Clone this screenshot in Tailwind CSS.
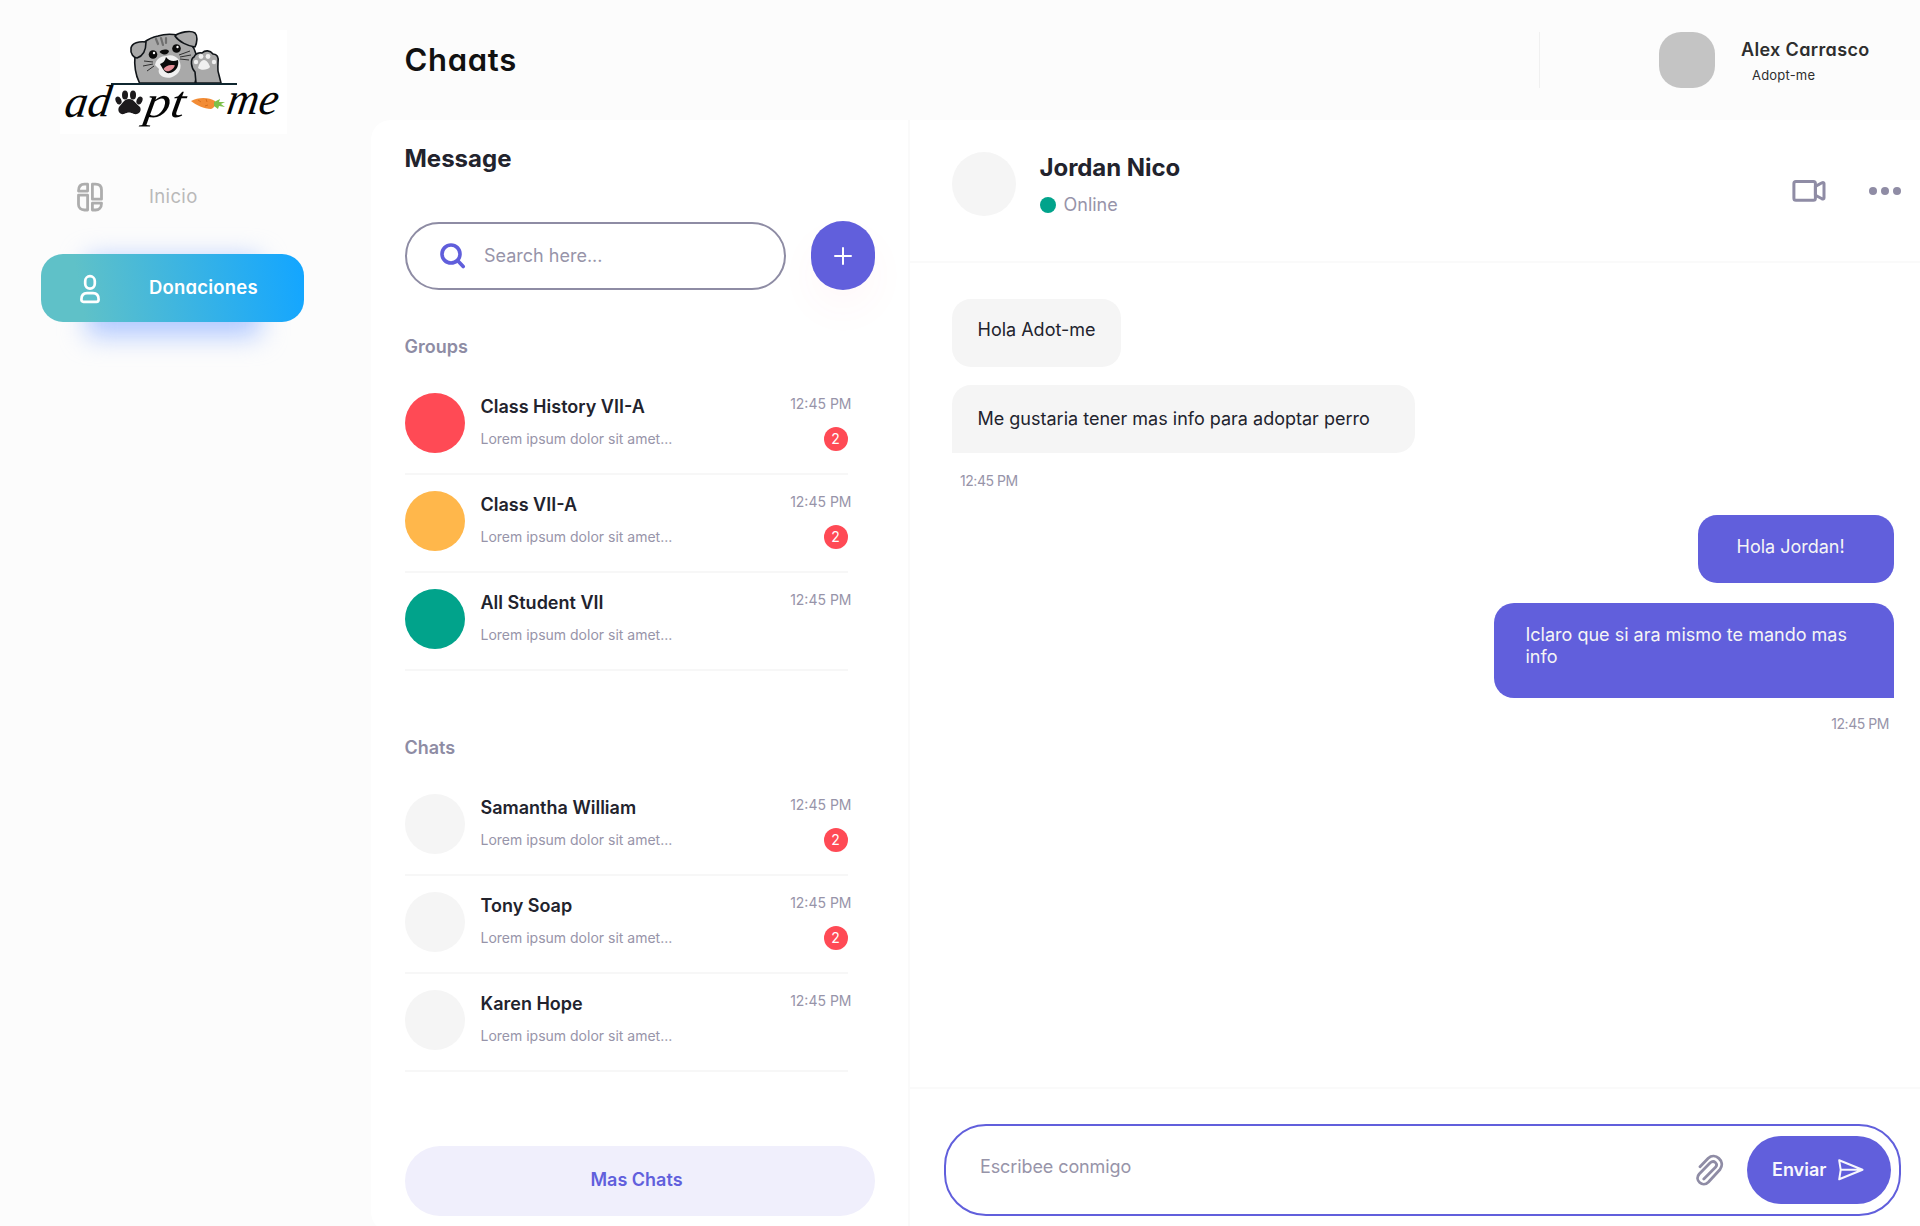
<!DOCTYPE html>
<html lang="es">
<head>
<meta charset="utf-8">
<title>Adopt-me</title>
<script src="https://cdn.jsdelivr.net/npm/@tailwindcss/browser@4"></script>
</head>
<body class="bg-[#fcfcfc] font-['Inter',sans-serif] text-[#22232d] antialiased">
<div class="flex h-[1226px] w-[1920px] overflow-hidden">

  <!-- Sidebar -->
  <aside class="flex w-[371px] shrink-0 flex-col pt-[30px] [font-feature-settings:'cv11']">
    <svg class="ml-[60px] h-[104px] w-[227px] bg-white" viewBox="0 0 227 104">
      <g stroke="#101418" stroke-width="1.6" stroke-linejoin="round" stroke-linecap="round">
        <path d="M79.500 53C75 44 74 36 75 25C78 15 88 8 98 6C104 4 112 4 118 5C127 9 134 16 136 24L138 40L135 53Z" fill="#a9a9a9"/>
        <path d="M86 12C79 11 72 13 71 18C70 24 74 28 77 28C83 26 86 20 86 12Z" fill="#a9a9a9"/>
        <path d="M115 6C119 2 131 0 135 3C138 6 137 13 135 17C128 16 119 12 115 6Z" fill="#a9a9a9"/>
        <path d="M136 53L135 42C131 38 130 29 134 27C135 24 139 22 142 23C145 20 150 20 153 24C157 24 159 27 158 33C158 38 157 40 159 45L161 53Z" fill="#a9a9a9"/>
      </g>
      <g stroke="#6f6f6f" stroke-width="2.2" stroke-linecap="round"><path d="M96 9L98 14M101 8L103 15M106 8L106 13"/></g>
      <path d="M95 35C96 29 101 26 106 26C111 24 116 26 119 30C123 38 119 45 111 47.500C103 49 97 44 99 39Z" fill="#f0f0f0"/>
      <circle cx="93" cy="24.500" r="4.300" fill="#0b0b0b"/><circle cx="116.500" cy="18.500" r="4.300" fill="#0b0b0b"/>
      <circle cx="94" cy="23" r="1.200" fill="#fff"/><circle cx="117.500" cy="17" r="1.200" fill="#fff"/>
      <path d="M99.500 22C102 19 107 19 109 21C108 25 104 26 99.500 22Z" fill="#0b0b0b"/>
      <path d="M100 34C103 33 105 31 106 27C109 31 113 32 118 30C119.500 37 115 42 110 43C105 44 103 39 100 34Z" fill="#0b0b0b"/>
      <path d="M103.500 39C105 36 110 34 115 35.500C113 40 107 44 103.500 39Z" fill="#e58f98"/>
      <path d="M93 32L84 31M93 34L83 36M94 36L87 41M119 25L130 21M120 27L131 25M120 29L129 30" stroke="#222" stroke-width=".9" fill="none"/>
      <g fill="#f0f0f0"><path d="M138 38C139 34 141 30 144 30C147 30 149 34 150 37C148 40 141 41 138 38Z"/><circle cx="136" cy="32" r="2.200"/><circle cx="141" cy="26.500" r="2.400"/><circle cx="148" cy="26.500" r="2.400"/><circle cx="154" cy="32" r="2.200"/></g>
      <path d="M51 54H177" stroke="#0f2730" stroke-width="1.800"/>
      <g font-family="'Liberation Serif',serif" font-style="italic" font-size="45" fill="#050505">
        <text x="4" y="87" textLength="46" lengthAdjust="spacingAndGlyphs" transform="rotate(-1 4 86) skewX(-9)" dx="13">ad</text>
        <text x="84" y="87" textLength="40" lengthAdjust="spacingAndGlyphs" transform="skewX(-9)" dx="13">pt</text>
        <text x="167" y="84.500" textLength="51" lengthAdjust="spacingAndGlyphs" transform="skewX(-9)" dx="12">me</text>
      </g>
      <g fill="#1c1a1c"><path d="M69 69C64 69 62 74 59 77C57 81 60 85 64 84C68 82 70 82 74 84C79 85 82 81 80 77C76 74 74 69 69 69Z"/><ellipse cx="58.500" cy="70.500" rx="2.800" ry="4" transform="rotate(-25 58.500 70.500)"/><ellipse cx="65" cy="65" rx="3" ry="4.500"/><ellipse cx="73" cy="65" rx="3" ry="4.500"/><ellipse cx="79.500" cy="70.500" rx="2.800" ry="4" transform="rotate(25 79.500 70.500)"/></g>
      <path d="M131 71C138 67 149 67 155 71C156 75 154 78 151 79C144 79 136 75 131 71Z" fill="#f28c35"/>
      <path d="M138 70L141 72M146 69L147 72M145 76L148 75" stroke="#d96e1b"/>
      <path d="M154 72L160 69L159 72L165 72L161 74L165 77L159 76L158 79L154 76Z" fill="#7cc04a"/>
    </svg>

    <nav class="flex flex-col">
      <a class="mt-[29px] flex h-[68px] items-center pl-[77px] text-[#b9b9b9]">
        <svg class="h-[30px] w-[26px]" viewBox="0 0 26 30" fill="none" stroke="#adadad" stroke-width="2.800" stroke-linejoin="round">
          <path d="M10.600 9.100H1.500C1.500 4.500 4 2.200 7.500 2.200H10.600Z"/>
          <path d="M1.500 13.200H10.600V28H7.500C4 28 1.500 26 1.500 22.500Z"/>
          <path d="M15.400 2.200H18.500C22.500 2.200 24.500 4.500 24.500 8V17.200H15.400Z"/>
          <path d="M15.400 21.200H24.500C24.500 25.500 22 28 18.500 28H15.400Z"/>
        </svg>
        <span class="ml-[46px] text-[18.500px] tracking-[0.350px]">Inicio</span>
      </a>
      <a class="relative z-0 mt-[23px] ml-[41px] h-[68px] w-[263px] text-white">
        <div class="absolute top-[4px] left-[46px] -z-20 h-[78px] w-[173px] bg-[#b0c8ff] blur-[13px]"></div>
        <div class="flex h-full items-center rounded-[22px] bg-[linear-gradient(80deg,#5fc1c8_16%,#14a6ff_98%)] pl-[39px]">
          <svg class="mt-px h-[30px] w-5" viewBox="0 0 20 30" fill="none" stroke="#fff" stroke-width="2.700">
            <rect x="5.200" y="2.200" width="9.600" height="12.400" rx="4.800"/><path d="M7 19.200H13C16.500 19.200 18.600 21.500 18.600 25.500C18.600 27 18 27.800 16.500 27.800H3.500C2 27.800 1.400 27 1.400 25.500C1.400 21.500 3.500 19.200 7 19.200Z"/>
          </svg>
          <span class="ml-[49px] text-[18.500px] font-semibold tracking-[0.200px]">Donaciones</span>
        </div>
      </a>
    </nav>
  </aside>

  <div class="flex w-[1549px] flex-col">
    <!-- Top bar -->
    <header class="flex h-[120px] shrink-0 items-center pl-[33.500px] [font-feature-settings:'cv11']">
      <h1 class="-mt-px text-[31px] leading-[36px] font-semibold tracking-[0.700px] text-[#111]">Chaats</h1>
      <div class="ml-auto flex h-14 items-center border-l border-[#f0f0f0] pr-[51px] pl-[119px]">
        <div class="size-14 rounded-[22px] bg-[#c4c4c4]"></div>
        <div class="ml-[26px] flex w-[128px] flex-col items-start text-[#2e2e2e]">
          <span class="mt-[2px] text-[18px] leading-6 font-semibold tracking-[0.350px] whitespace-nowrap">Alex Carrasco</span>
          <span class="mt-[3px] ml-[11px] text-[13px] leading-5 tracking-[0.200px]">Adopt-me</span>
        </div>
      </div>
    </header>

    <main class="flex h-[1112px] shrink-0 rounded-l-[20px] bg-white">
      <!-- Conversation list -->
      <section class="flex w-[539px] shrink-0 flex-col border-r-2 border-[#fafafa] pl-[33.500px]">
        <h2 class="mt-[23px] text-[24px] leading-8 font-bold">Message</h2>
        <div class="mt-[46px] flex h-[69px] items-center">
          <div class="flex h-[68px] w-[381px] items-center rounded-full border-2 border-[#8e8ca4] pl-[33.500px] text-[#9794a9]">
            <svg class="size-[26px]" viewBox="0 0 26 26" fill="none" stroke="#605edb" stroke-width="3.600" stroke-linecap="round"><circle cx="11" cy="11" r="9"/><path d="M17.800 17.800L23.200 23.500"/></svg>
            <span class="ml-[18px] text-[18px]">Search here...</span>
          </div>
          <button class="ml-[25px] flex h-[69px] w-16 items-center justify-center rounded-full bg-[#615fdc] shadow-[0_20px_40px_rgba(255,80,100,0.04)]">
            <svg class="size-[18px]" viewBox="0 0 18 18" stroke="#fff" stroke-width="2" stroke-linecap="round"><path d="M9 1V17M1 9H17"/></svg>
          </button>
        </div>

        <h3 class="mt-[45px] text-[18px] leading-6 font-semibold text-[#8e8ca4]">Groups</h3>
        <ul class="mt-[34px] flex w-[443px] flex-col gap-4">
          <li class="flex h-[82px] border-b-2 border-[#f7f7f7]">
            <div class="size-[60px] shrink-0 rounded-full bg-[#ff4a55]"></div>
            <div class="ml-4 flex-1"><p class="mt-[2px] text-[18px] leading-6 font-semibold">Class History VII-A</p><p class="mt-[10px] text-[14px] leading-5 text-[#9794a9]">Lorem ipsum dolor sit amet...</p></div>
            <div class="-mr-1 flex flex-col items-end text-[14px] leading-5 text-[#9794a9]"><span class="mt-px">12:45 PM</span><span class="mt-[13px] mr-1 flex size-6 items-center justify-center rounded-full bg-[#ff4a55] text-white">2</span></div>
          </li>
          <li class="flex h-[82px] border-b-2 border-[#f7f7f7]">
            <div class="size-[60px] shrink-0 rounded-full bg-[#ffb74b]"></div>
            <div class="ml-4 flex-1"><p class="mt-[2px] text-[18px] leading-6 font-semibold">Class VII-A</p><p class="mt-[10px] text-[14px] leading-5 text-[#9794a9]">Lorem ipsum dolor sit amet...</p></div>
            <div class="-mr-1 flex flex-col items-end text-[14px] leading-5 text-[#9794a9]"><span class="mt-px">12:45 PM</span><span class="mt-[13px] mr-1 flex size-6 items-center justify-center rounded-full bg-[#ff4a55] text-white">2</span></div>
          </li>
          <li class="flex h-[82px] border-b-2 border-[#f7f7f7]">
            <div class="size-[60px] shrink-0 rounded-full bg-[#01a38b]"></div>
            <div class="ml-4 flex-1"><p class="mt-[2px] text-[18px] leading-6 font-semibold">All Student VII</p><p class="mt-[10px] text-[14px] leading-5 text-[#9794a9]">Lorem ipsum dolor sit amet...</p></div>
            <div class="-mr-1 text-[14px] leading-5 text-[#9794a9]"><p class="mt-px">12:45 PM</p></div>
          </li>
        </ul>

        <h3 class="mt-[65px] text-[18px] leading-6 font-semibold text-[#8e8ca4]">Chats</h3>
        <ul class="mt-[34px] flex w-[443px] flex-col gap-4">
          <li class="flex h-[82px] border-b-2 border-[#f7f7f7]">
            <div class="size-[60px] shrink-0 rounded-full bg-[#f5f5f5]"></div>
            <div class="ml-4 flex-1"><p class="mt-[2px] text-[18px] leading-6 font-semibold">Samantha William</p><p class="mt-[10px] text-[14px] leading-5 text-[#9794a9]">Lorem ipsum dolor sit amet...</p></div>
            <div class="-mr-1 flex flex-col items-end text-[14px] leading-5 text-[#9794a9]"><span class="mt-px">12:45 PM</span><span class="mt-[13px] mr-1 flex size-6 items-center justify-center rounded-full bg-[#ff4a55] text-white">2</span></div>
          </li>
          <li class="flex h-[82px] border-b-2 border-[#f7f7f7]">
            <div class="size-[60px] shrink-0 rounded-full bg-[#f5f5f5]"></div>
            <div class="ml-4 flex-1"><p class="mt-[2px] text-[18px] leading-6 font-semibold">Tony Soap</p><p class="mt-[10px] text-[14px] leading-5 text-[#9794a9]">Lorem ipsum dolor sit amet...</p></div>
            <div class="-mr-1 flex flex-col items-end text-[14px] leading-5 text-[#9794a9]"><span class="mt-px">12:45 PM</span><span class="mt-[13px] mr-1 flex size-6 items-center justify-center rounded-full bg-[#ff4a55] text-white">2</span></div>
          </li>
          <li class="flex h-[82px] border-b-2 border-[#f7f7f7]">
            <div class="size-[60px] shrink-0 rounded-full bg-[#f5f5f5]"></div>
            <div class="ml-4 flex-1"><p class="mt-[2px] text-[18px] leading-6 font-semibold">Karen Hope</p><p class="mt-[10px] text-[14px] leading-5 text-[#9794a9]">Lorem ipsum dolor sit amet...</p></div>
            <div class="-mr-1 text-[14px] leading-5 text-[#9794a9]"><p class="mt-px">12:45 PM</p></div>
          </li>
        </ul>
        <button class="mt-[74px] h-[69.500px] w-[470px] rounded-full bg-[#f0effc] pr-1.5 pb-0.5 text-[18px] font-semibold text-[#615fdc]">Mas Chats</button>
      </section>

      <!-- Conversation -->
      <section class="flex flex-1 flex-col">
        <header class="flex h-[143px] shrink-0 items-start border-b-2 border-[#fafafa] pt-8 pr-[19px] pl-[41.500px]">
          <div class="size-16 rounded-full bg-[#f5f5f5]"></div>
          <div class="ml-6">
            <p class="text-[24px] leading-8 font-bold tracking-[-0.050px]">Jordan Nico</p>
            <p class="mt-[9px] flex items-center text-[18px] leading-6 text-[#9794a9]"><span class="-mt-px mr-2 size-4 rounded-full bg-[#01a38b]"></span>Online</p>
          </div>
          <svg class="mt-[27px] ml-auto h-6 w-[34px]" viewBox="0 0 34 24" fill="none" stroke="#8f8ca5" stroke-width="3" stroke-linejoin="round"><rect x="1.900" y="2.400" width="21.500" height="18.800" rx="2"/><path d="M23.400 7.400L30 3.800C31 3.300 32 3.500 32 4.500V19C32 20 31 20.300 30 19.800L23.400 16.200Z"/></svg>
          <div class="mt-[35px] ml-[43px] flex gap-1"><span class="size-2 rounded-full bg-[#8f8ca5]"></span><span class="size-2 rounded-full bg-[#8f8ca5]"></span><span class="size-2 rounded-full bg-[#8f8ca5]"></span></div>
        </header>

        <div class="flex flex-1 flex-col items-start pt-9 pr-[26px] pl-[41.500px] text-[18px] leading-[22px]">
          <div class="h-[68px] w-[169.500px] rounded-[19px] bg-[#f5f5f5] pt-5 pl-[26px]">Hola Adot-me</div>
          <div class="mt-[18px] h-[68px] w-[463.500px] rounded-[19px] rounded-bl-none bg-[#f5f5f5] pt-[23px] pl-[26px]">Me gustaria tener mas info para adoptar perro</div>
          <time class="mt-[18px] ml-[8.500px] text-[14px] leading-5 tracking-[-0.450px] text-[#9794a9] [font-feature-settings:'cv11']">12:45 PM</time>
          <div class="mt-[24px] h-[68px] w-[196.500px] self-end rounded-[19px] bg-[#615fdc] pt-[21px] pl-[39px] text-[#f5f5f5]">Hola Jordan!</div>
          <div class="mt-5 h-[94.500px] w-[400.500px] self-end rounded-[20px] rounded-br-none bg-[#615fdc] pt-[21px] pr-10 pl-8 text-[#f5f5f5]">Iclaro que si ara mismo te mando mas info</div>
          <time class="mt-4 mr-[5px] self-end text-[14px] leading-5 tracking-[-0.450px] text-[#9794a9] [font-feature-settings:'cv11']">12:45 PM</time>
        </div>

        <footer class="h-[145px] shrink-0 border-t-2 border-[#fafafa] pt-[35px] pl-[34px]">
          <div class="flex h-[92px] w-[957px] items-center rounded-[42px] border-2 border-[#615fdc] pr-2 pl-[34px]">
            <span class="mb-[8px] text-[18px] tracking-[-0.100px] text-[#9794a9]">Escribee conmigo</span>
            <svg class="-mt-px ml-auto h-8 w-7" viewBox="0 0 28 32" fill="none" stroke="#8f8ca5" stroke-width="2.800" stroke-linecap="round" stroke-linejoin="round"><path d="M4 12.800L12.200 4.300C19 -2 30 7 24 15.500L12.500 28C6.500 34 -2 26 3.200 20L14.200 8.700C18 5.500 22.500 9.800 19.500 13.300L7.800 25"/></svg>
            <button class="-mt-px ml-[23px] flex h-[68px] w-[144px] items-center rounded-full bg-[#615fdc] pl-[25px] text-[18px] font-semibold text-[#f8f8fd]">Enviar
              <svg class="ml-3 h-[22px] w-[26px]" viewBox="0 0 26 22" fill="none" stroke="#f8f8fd" stroke-width="2" stroke-linejoin="round"><path d="M1.200 1.300L24.500 10.800L1.200 20.300L2.700 10.800ZM2.700 10.800H23"/></svg>
            </button>
          </div>
        </footer>
      </section>
    </main>
  </div>
</div>
</body>
</html>
